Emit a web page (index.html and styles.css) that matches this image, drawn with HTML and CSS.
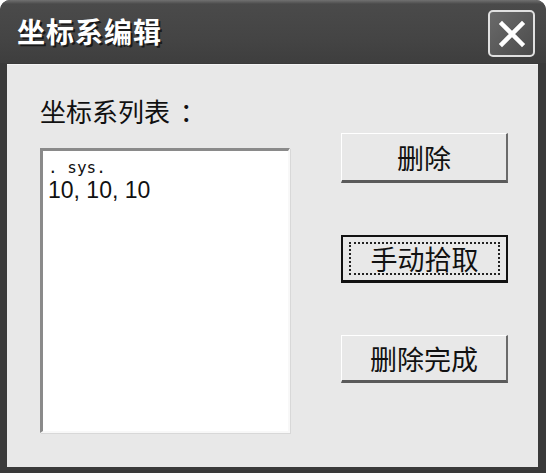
FILE: index.html
```html
<!DOCTYPE html>
<html lang="zh">
<head>
  <meta charset="UTF-8">
  <title>坐标系编辑</title>
  <link rel="stylesheet" href="styles.css">
</head>
<body>

<div class="dialog">
  <div class="titleBar">
    <span class="titleText">坐标系编辑</span>
    <div class="closeBtn">
      <svg width="32" height="32" viewBox="0 0 32 32">
        <path d="M6 6 L26 26 M26 6 L6 26" stroke="#fff" stroke-width="4.5" stroke-linecap="square"/>
      </svg>
    </div>
  </div>
  <div class="client">
    <div class="leftCol">
      <div class="label">坐标系列表 <span class="colon">：</span></div>
      <div class="listBox">
        <div class="itemSmall">. sys.</div>
        <div class="itemBig">10, 10, 10</div>
      </div>
    </div>
    <div class="rightCol">
      <div class="btn first">删除</div>
      <div class="btn default"><span class="focusRect">手动拾取</span></div>
      <div class="btn">删除完成</div>
    </div>
  </div>
</div>

</body>
</html>
```

FILE: styles.css
```css
*, *:before, *:after {
  box-sizing: border-box;
}

body {
  margin: 0;
  padding: 0;
  background: #ffffff;
  font-family: "Noto Sans CJK SC", "Liberation Sans", sans-serif;
}

.dialog {
  width: 546px;
  height: 473px;
  background: #3a3a3a;
  border-radius: 10px 10px 0 0;
  display: flex;
  flex-direction: column;
  overflow: hidden;
}

.titleBar {
  height: 63px;
  flex: none;
  display: flex;
  align-items: center;
  justify-content: space-between;
  padding: 0 11px 0 17px;
  background: linear-gradient(to bottom, #707070 0px, #4a4a4a 4px, #444444 40px, #3e3e3e 63px);
}

.titleText {
  color: #ffffff;
  font-size: 28px;
  font-weight: bold;
  letter-spacing: 1px;
  text-shadow: 2px 2px 0 #1a1a1a;
  margin-top: -2px;
}

.closeBtn {
  width: 47px;
  height: 47px;
  margin-top: 4px;
  border: 2px solid #e0e0e0;
  border-radius: 5px;
  background: linear-gradient(to bottom right, #6a6a6a, #4c4c4c);
  display: flex;
  align-items: center;
  justify-content: center;
}

.client {
  flex: 1;
  margin: 1px 8px 6px 7px;
  background: #e8e8e8;
  border-top: 1px solid #f4f4f4;
  display: flex;
  padding: 31px 0 0 33px;
}

.leftCol {
  width: 250px;
  display: flex;
  flex-direction: column;
}

.label {
  font-size: 26px;
  line-height: 30px;
  color: #111111;
}

.colon {
  margin-left: 4px;
}

.listBox {
  margin-top: 22px;
  height: 285px;
  background: #ffffff;
  border-top: 3px solid #8a8a8a;
  border-left: 3px solid #8a8a8a;
  border-right: 2px solid #f8f8f8;
  border-bottom: 2px solid #f8f8f8;
  box-shadow: 1px 1px 0 #d8d8d8;
  padding: 7px 5px;
  color: #111111;
}

.itemSmall {
  font-family: "DejaVu Sans Mono", monospace;
  font-size: 16px;
  line-height: 20px;
}

.itemBig {
  font-family: "Liberation Sans", sans-serif;
  font-size: 23px;
  line-height: 24px;
}

.rightCol {
  margin-left: 51px;
  width: 167px;
  display: flex;
  flex-direction: column;
  gap: 52px;
}

.btn {
  height: 48px;
  background: #e8e8e8;
  border-top: 1px solid #ffffff;
  border-left: 1px solid #ffffff;
  border-right: 2px solid #6a6a6a;
  border-bottom: 3px solid #5a5a5a;
  display: flex;
  align-items: center;
  justify-content: center;
  font-size: 27px;
  color: #111111;
}

.btn.first {
  margin-top: 37px;
  height: 50px;
}

.btn.default {
  border: 2px solid #111111;
  border-bottom-width: 3px;
  padding: 5px 6px;
}

.focusRect {
  flex: 1;
  height: 100%;
  border: 2px dotted #222222;
  display: flex;
  align-items: center;
  justify-content: center;
}
```
